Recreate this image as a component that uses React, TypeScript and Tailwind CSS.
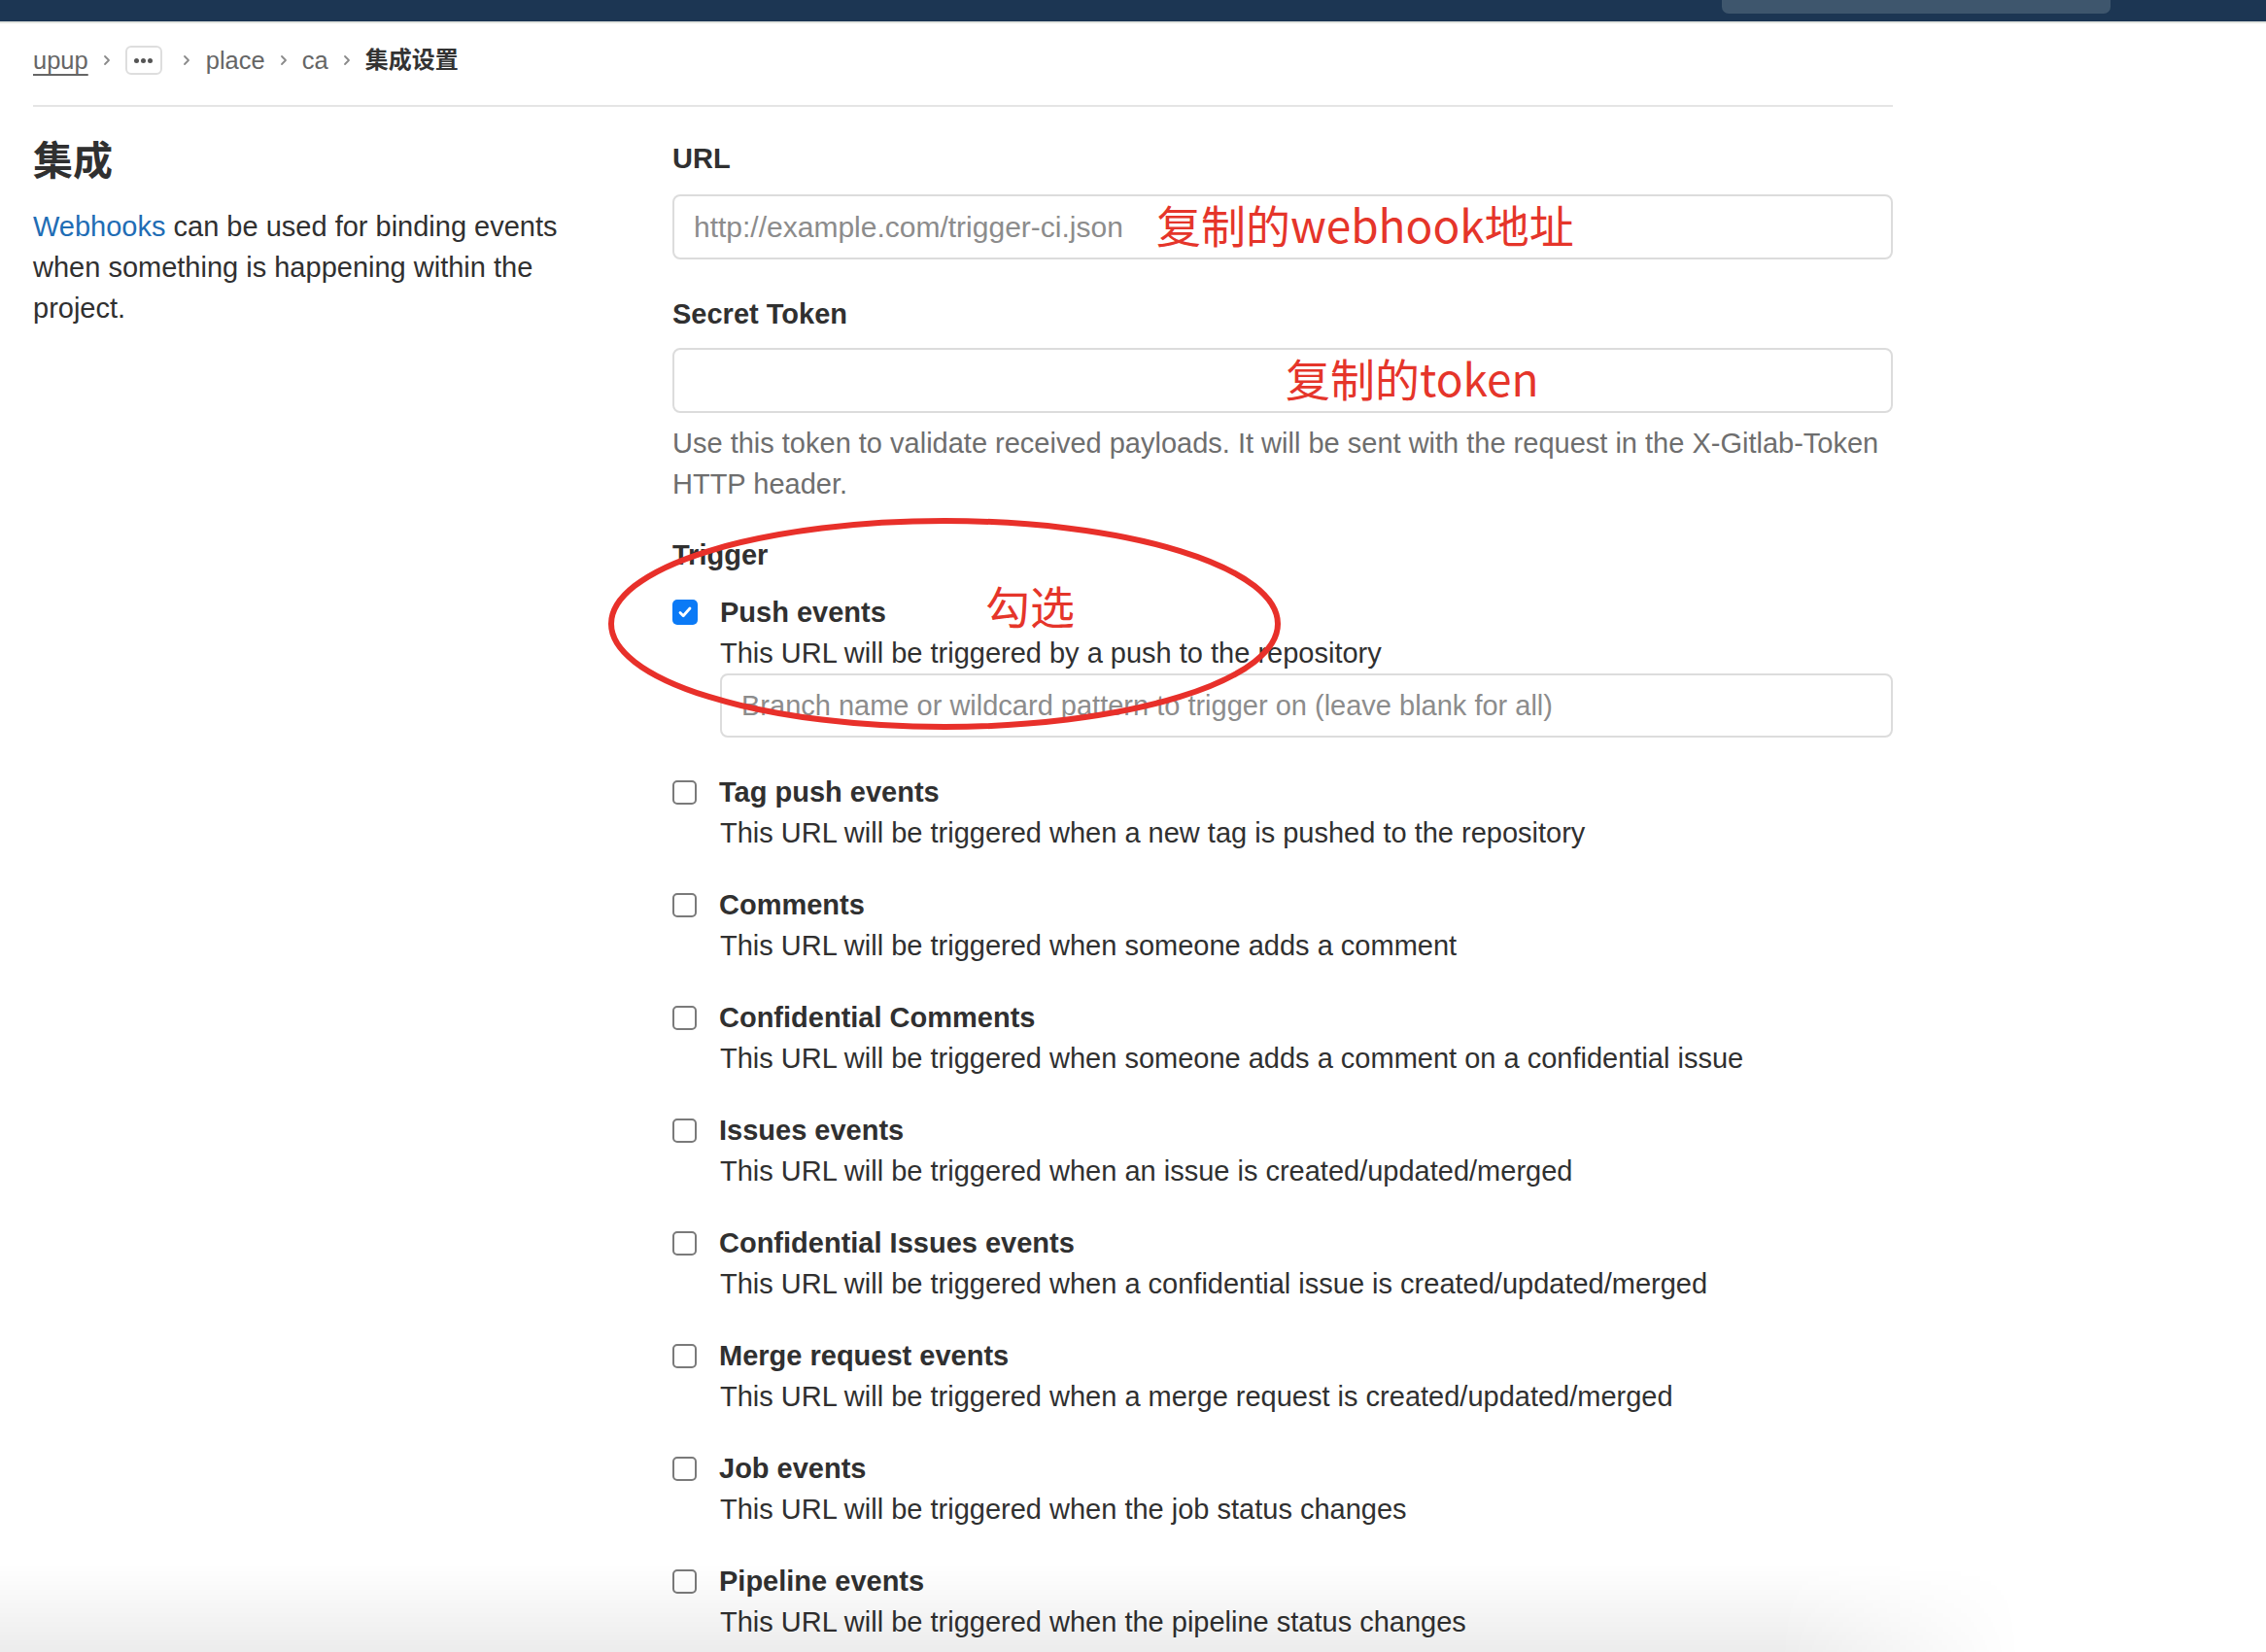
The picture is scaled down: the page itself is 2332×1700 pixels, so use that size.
import { useState } from "react";

const triggers = [
  { name: "Tag push events", desc: "This URL will be triggered when a new tag is pushed to the repository" },
  { name: "Comments", desc: "This URL will be triggered when someone adds a comment" },
  { name: "Confidential Comments", desc: "This URL will be triggered when someone adds a comment on a confidential issue" },
  { name: "Issues events", desc: "This URL will be triggered when an issue is created/updated/merged" },
  { name: "Confidential Issues events", desc: "This URL will be triggered when a confidential issue is created/updated/merged" },
  { name: "Merge request events", desc: "This URL will be triggered when a merge request is created/updated/merged" },
  { name: "Job events", desc: "This URL will be triggered when the job status changes" },
  { name: "Pipeline events", desc: "This URL will be triggered when the pipeline status changes" },
];

function Chevron({ wide }: { wide?: boolean }) {
  return (
    <svg width="10" height="14" viewBox="0 0 10 14" className={wide ? "ml-[20px] mr-[15px] shrink-0" : "mx-[14px] shrink-0"}>
      <path d="M3 3l4 4-4 4" fill="none" stroke="#8a8a8a" strokeWidth="1.8" strokeLinecap="round" strokeLinejoin="round" />
    </svg>
  );
}

function Checkbox({ checked }: { checked?: boolean }) {
  if (checked) {
    return (
      <span className="flex h-[26px] w-[26px] shrink-0 items-center justify-center rounded-[5px] bg-[#0b7af6]">
        <svg width="18" height="18" viewBox="0 0 18 18">
          <path d="M4 9.5l3.2 3.2L14 5" fill="none" stroke="#fff" strokeWidth="2.8" strokeLinecap="round" strokeLinejoin="round" />
        </svg>
      </span>
    );
  }
  return <span className="h-[25px] w-[25px] shrink-0 rounded-[5px] border-2 border-[#7a7a7a] bg-white" />;
}

const annotation = "font-['Noto_Sans_CJK_SC','Liberation_Sans',sans-serif] text-[#e5352a]";

export default function App() {
  const [push] = useState(true);
  return (
    <div className="relative h-[1700px] overflow-hidden bg-white font-['Liberation_Sans','Noto_Sans_CJK_SC',sans-serif] text-[29px] leading-[42px] text-[#303030]">
      <header className="flex h-[22px] justify-end bg-[#1c3653]">
        <div className="mr-[160px] h-[14px] w-[400px] rounded-b-[7px] bg-[#3e566d]" />
      </header>
      <div className="h-[2px] bg-[#e2e5e1]" />

      <div className="ml-[34px] w-[1914px]">
        <nav className="mt-[23px] flex h-[30px] items-center text-[25.5px] leading-[30px] text-[#666]">
          <span className="underline decoration-[1.5px] underline-offset-[5px]">upup</span>
          <Chevron />
          <span className="flex h-[30px] w-[38px] items-center justify-center rounded-[6px] border-2 border-[#dedede]">
            <span className="flex gap-[2px]">
              <span className="h-[5px] w-[5px] rounded-full bg-[#555]" />
              <span className="h-[5px] w-[5px] rounded-full bg-[#555]" />
              <span className="h-[5px] w-[5px] rounded-full bg-[#555]" />
            </span>
          </span>
          <Chevron wide />
          <span>place</span>
          <Chevron />
          <span>ca</span>
          <Chevron />
          <span className="text-[24px] font-bold text-[#333]">集成设置</span>
        </nav>
        <div className="mt-[31px] h-[2px] bg-[#e5e5e5]" />

        <div className="flex">
          <aside className="w-[658px] shrink-0 pr-[68px] pt-[32px]">
            <h1 className="text-[41px] font-bold leading-[48px] text-[#303030]">集成</h1>
            <p className="mt-[22px]">
              <span className="text-[#1f6db5]">Webhooks</span> can be used for binding events when something is happening within the project.
            </p>
          </aside>

          <main className="flex-1 pt-[32px]">
            <label className="block font-bold">URL</label>
            <div className="relative mt-[16px] flex h-[67px] items-center rounded-[8px] border-2 border-[#dcdcdc] px-[20px] text-[30px] text-[#8c8c8c]">
              http://example.com/trigger-ci.json
              <span className={`absolute left-[496px] top-[0px] text-[46px] leading-[56px] ${annotation}`}>复制的webhook地址</span>
            </div>

            <label className="mt-[35px] block font-bold">Secret Token</label>
            <div className="relative mt-[14px] h-[67px] rounded-[8px] border-2 border-[#dcdcdc]">
              <span className={`absolute left-[629px] top-[0px] text-[46px] leading-[56px] ${annotation}`}>复制的token</span>
            </div>
            <p className="mt-[10px] text-[#6e6e6e]">
              Use this token to validate received payloads. It will be sent with the request in the X-Gitlab-Token HTTP header.
            </p>

            <label className="mt-[31px] block font-bold">Trigger</label>

            <div className="relative mt-[17px]">
              <div className="flex h-[42px] items-center gap-[23px]">
                <Checkbox checked={push} />
                <span className="font-bold">Push events</span>
              </div>
              <div className="pl-[49px]">
                <p>This URL will be triggered by a push to the repository</p>
                <div className="flex h-[66px] items-center rounded-[8px] border-2 border-[#dcdcdc] px-[20px] text-[#8c8c8c]">
                  Branch name or wildcard pattern to trigger on (leave blank for all)
                </div>
              </div>
              <span className={`absolute left-[322px] top-[-15px] text-[46px] leading-[56px] ${annotation}`}>勾选</span>
            </div>

            {triggers.map((t, i) => (
              <div key={t.name} className={i === 0 ? "mt-[35px]" : "mt-[32px]"}>
                <div className="flex h-[42px] items-center gap-[23px]">
                  <Checkbox />
                  <span className="font-bold">{t.name}</span>
                </div>
                <p className="pl-[49px]">{t.desc}</p>
              </div>
            ))}
          </main>
        </div>
      </div>

      <svg className="pointer-events-none absolute left-0 top-0" width="2332" height="1700">
        <ellipse cx="972" cy="642" rx="343" ry="106" fill="none" stroke="#e8302a" strokeWidth="6" />
      </svg>

      <div className="pointer-events-none absolute bottom-0 left-0 h-[90px] w-[2080px] rounded-tr-[80px] bg-[linear-gradient(to_bottom,rgba(0,0,0,0),rgba(0,0,0,0.075))] [mask-image:linear-gradient(to_right,black_88%,transparent)]" />
    </div>
  );
}
